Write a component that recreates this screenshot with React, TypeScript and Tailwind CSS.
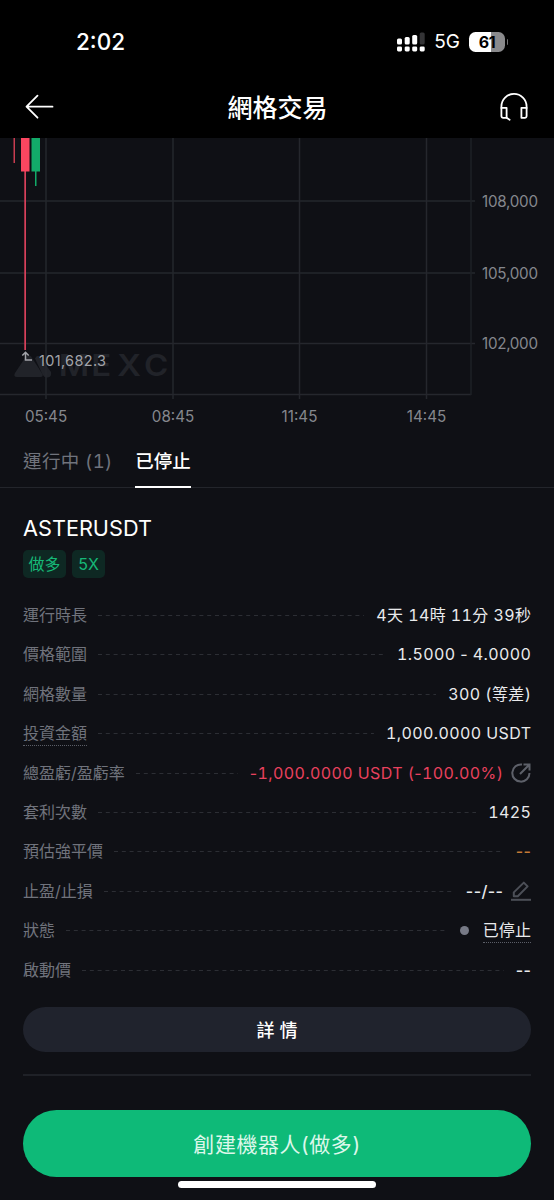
import React from "react";
import { clsx } from "clsx";

interface DetailRow {
  label: string;
  value: string;
  tone?: "default" | "loss" | "warning";
  underlineLabel?: boolean;
  icon?: "share" | "edit";
  status?: boolean;
}

const priceTicks = [
  { label: "108,000", y: 63 },
  { label: "105,000", y: 135 },
  { label: "102,000", y: 205.5 },
];

const timeTicks = [
  { label: "05:45", x: 46 },
  { label: "08:45", x: 173 },
  { label: "11:45", x: 299.5 },
  { label: "14:45", x: 426.5 },
];

const details: DetailRow[] = [
  { label: "運行時長", value: "4天 14時 11分 39秒" },
  { label: "價格範圍", value: "1.5000 - 4.0000" },
  { label: "網格數量", value: "300 (等差)" },
  { label: "投資金額", value: "1,000.0000 USDT", underlineLabel: true },
  {
    label: "總盈虧/盈虧率",
    value: "-1,000.0000 USDT (-100.00%)",
    tone: "loss",
    icon: "share",
  },
  { label: "套利次數", value: "1425" },
  { label: "預估強平價", value: "--", tone: "warning" },
  { label: "止盈/止損", value: "--/--", icon: "edit" },
  { label: "狀態", value: "已停止", status: true },
  { label: "啟動價", value: "--" },
];

function SignalIcon() {
  return (
    <svg width="28" height="20" viewBox="0 0 28 20" fill="#fff">
      <rect x="0" y="6.5" width="5" height="6" rx="1.5" />
      <rect x="7.7" y="5" width="5" height="7.5" rx="1.5" />
      <rect x="15.2" y="3" width="5" height="9.5" rx="1.5" />
      <rect x="22.7" y="0.5" width="5" height="12" rx="1.5" fill="#343436" />
      <rect x="0" y="14.4" width="5" height="5" rx="1.4" />
      <rect x="7.7" y="14.4" width="5" height="5" rx="1.4" />
      <rect x="15.2" y="14.4" width="5" height="5" rx="1.4" />
      <rect x="22.7" y="14.4" width="5" height="5" rx="1.4" />
    </svg>
  );
}

function Battery() {
  return (
    <div className="flex items-center">
      <div className="flex h-5 w-9 items-center justify-center rounded-[6.5px] bg-linear-to-r from-white from-61% to-[#8a8a8c] to-61% text-[16px] font-bold tracking-[-0.3px] text-black">
        61
      </div>
      <div className="ml-[1.5px] h-[6px] w-[1.5px] rounded-r-full bg-[#707072]" />
    </div>
  );
}

function BackIcon() {
  return (
    <svg
      width="30"
      height="26"
      viewBox="0 0 30 26"
      fill="none"
      stroke="#fff"
      strokeWidth="1.8"
      strokeLinecap="round"
    >
      <path d="M27.5 12.7H1.8M12.5 1.7 1.5 12.7l11 11" strokeLinejoin="round" />
    </svg>
  );
}

function HeadsetIcon() {
  return (
    <svg
      width="28"
      height="28"
      viewBox="0 0 28 28"
      fill="none"
      stroke="#fff"
      strokeWidth="1.8"
      strokeLinejoin="round"
      strokeLinecap="round"
    >
      <path d="M1.4 15V13.5a12.6 12.6 0 0 1 25.2 0V15" />
      <path d="M1.4 14.8h5.2v10H3.2a1.8 1.8 0 0 1-1.8-1.8z" />
      <path d="M26.6 14.8h-5.2v10h3.4a1.8 1.8 0 0 0 1.8-1.8z" />
      <path d="M6.6 24.8 9.6 26.8" />
    </svg>
  );
}

function ShareIcon() {
  return (
    <svg
      width="20"
      height="20"
      viewBox="0 0 20 20"
      fill="none"
      stroke="#5d6069"
      strokeWidth="2"
    >
      <path d="M11 1.5A8.6 8.6 0 1 0 18.5 10" />
      <path d="M9 11 18 2M12.5 1.6h6v6" />
    </svg>
  );
}

function EditIcon() {
  return (
    <svg
      width="20"
      height="20"
      viewBox="0 0 20 20"
      fill="none"
      stroke="#4c4f57"
      strokeWidth="2"
    >
      <path d="M2.8 15.2v-3.8L12.8 1.6l3.8 3.8-9.8 9.8z" strokeLinejoin="round" />
      <path d="M0 18.8h20" />
    </svg>
  );
}

function PriceChart() {
  return (
    <svg width="554" height="294" viewBox="0 0 554 294" className="block">
      {/* Watermark */}
      <g fill="#212329">
        <path d="M26 218.5q2.5-3 5 0L42.5 236q1 3-2 3H17q-4 0-2-4z" />
        <path d="M35 220.5q2.5-5 5.5-1L51 234q1 5-3.5 5.5-3 .5-5-3z" />
        <text
          x="53.5 83 106.5 131"
          y="238.5"
          fontSize="30"
          fontWeight="600"
          transform="scale(1.1 1)"
        >
          MEXC
        </text>
      </g>

      {/* Grid */}
      <g stroke="#25272d" strokeWidth="1.5">
        {priceTicks.map((tick) => (
          <line key={tick.label} x1="0" x2="475" y1={tick.y} y2={tick.y} />
        ))}
        {timeTicks.map((tick) => (
          <line key={tick.label} x1={tick.x} x2={tick.x} y1="0" y2="261" />
        ))}
        <line x1="0" x2="471" y1="256.5" y2="256.5" />
        <line x1="471" x2="471" y1="0" y2="257" stroke="#1e2026" />
      </g>

      {/* Candles */}
      <rect x="13.5" y="0" width="1.5" height="25" fill="#c83c50" />
      <rect x="24.3" y="33" width="1.7" height="179" fill="#d8405a" />
      <rect x="21" y="0" width="8.5" height="33.5" fill="#fb4660" />
      <rect x="35" y="33" width="1.5" height="15" fill="#12aa69" />
      <rect x="31.5" y="0" width="8.5" height="33.5" fill="#12aa69" />

      {/* Low marker */}
      <path
        d="M32 222h-6.5v-7.500M22.3 217.500l3.200-3.200 3.200 3.200"
        fill="none"
        stroke="#a2a4a9"
        strokeWidth="1.5"
      />
      <text x="39" y="227.5" fontSize="14.5" textLength="67" fill="#a2a4a9">
        101,682.3
      </text>

      <g fontSize="15.2" fill="#85878d">
        {priceTicks.map((tick) => (
          <text key={tick.label} x="482" y={tick.y + 5.5} textLength="56">
            {tick.label}
          </text>
        ))}
        {timeTicks.map((tick) => (
          <text key={tick.label} x={tick.x} y="284" textAnchor="middle">
            {tick.label}
          </text>
        ))}
      </g>
    </svg>
  );
}

// Only the digits are tabular, dashes keep their own width
function Value({ text }: { text: string }) {
  return (
    <>
      {text.split(/(-+)/).map((part, index) => (
        <span
          key={index}
          className={part.startsWith("-") ? "normal-nums" : "tabular-nums"}
        >
          {part}
        </span>
      ))}
    </>
  );
}

function Detail({ row }: { row: DetailRow }) {
  return (
    <div className="flex h-[39.45px] items-center">
      <span
        className={clsx(
          "text-[16px] leading-[23px] text-[#70737c]",
          row.underlineLabel && "-mb-px border-b border-dotted border-[#5b5e67]",
        )}
      >
        {row.label}
      </span>
      <svg className="mr-3 ml-[11px] h-px min-w-0 flex-1">
        <line
          x1="0"
          x2="100%"
          y1="0.5"
          y2="0.5"
          stroke="#2c2e34"
          strokeDasharray="4 3.8"
        />
      </svg>
      {row.status && <i className="mr-[14px] size-[9px] rounded-full bg-[#777a86]" />}
      <span
        className={clsx(
          "text-[16px] leading-[23px] whitespace-nowrap",
          row.value.startsWith("--") && "font-medium",
          row.status ? "tracking-[0.1px]" : "-mr-[0.4px] tracking-[0.4px]",
          row.tone === "loss" && "text-[#e8415d]",
          row.tone === "warning" && "text-[#c47a35]",
          !row.tone && "text-[#e9eaec]",
          row.status && "-mb-px border-b border-dotted border-[#5b5e67]",
        )}
      >
        <Value text={row.value} />
      </span>
      {row.icon && (
        <span className="ml-2">
          {row.icon === "share" ? <ShareIcon /> : <EditIcon />}
        </span>
      )}
    </div>
  );
}

export default function App() {
  return (
    <div className="flex h-[1200px] w-[554px] flex-col overflow-hidden bg-[#0f1015] font-[Inter,'Noto_Sans_CJK_TC',sans-serif] text-white">
      <header className="h-[138px] shrink-0 bg-black">
        <div className="flex h-[83px] items-center justify-between pr-[46px] pl-[76px]">
          <span className="text-[22.5px] font-medium">2:02</span>
          <div className="flex items-center">
            <SignalIcon />
            <span className="mr-[9px] ml-[9px] pt-[2px] text-[19px]">5G</span>
            <Battery />
          </div>
        </div>
        <div className="flex h-[48px] items-center justify-between pr-[26px] pl-[25px]">
          <BackIcon />
          <h1 className="pt-1 text-[25px] font-medium">網格交易</h1>
          <HeadsetIcon />
        </div>
      </header>

      <PriceChart />

      {/* Tabs */}
      <nav className="flex h-[56px] shrink-0 gap-6 border-b-[1.5px] border-[#23252b] pl-[23px] text-[18.5px]">
        <button className="h-[56px] w-[88px] pt-1 text-left tracking-[0.4px] whitespace-nowrap text-[#70737c] tabular-nums">
          運行中 (1)
        </button>
        <button className="h-[56px] w-[56px] border-b-[2.5px] border-white pt-[6px] font-medium whitespace-nowrap">
          已停止
        </button>
      </nav>

      <main className="flex flex-col px-[23px]">
        <h2 className="mt-[24px] text-[21.7px] leading-8">ASTERUSDT</h2>
        <div className="mt-[6px] flex h-7 gap-[6px] text-[16px] text-[#16b877]">
          <span className="flex w-[43px] items-center justify-center rounded-[5px] bg-[#0e2823]">
            做多
          </span>
          <span className="flex w-[33px] items-center justify-center rounded-[5px] bg-[#0e2823]">
            5X
          </span>
        </div>

        <div className="mt-[17.6px]">
          {details.map((row) => (
            <Detail key={row.label} row={row} />
          ))}
        </div>

        <button className="mt-[17.4px] h-[45px] rounded-full bg-[#20232d] pt-px text-[18px] font-medium">
          詳 情
        </button>
        <div className="mt-[22px] h-[1.5px] bg-[#1f2127]" />
        <button className="mt-[34px] h-[67px] rounded-full bg-[#0eba78] pt-[3px] text-[21px] tracking-[0.55px] text-[#dcf7ea]">
          創建機器人(做多)
        </button>
        <div className="mt-1 h-[7.5px] w-[198px] self-center rounded-full bg-white" />
      </main>
    </div>
  );
}
